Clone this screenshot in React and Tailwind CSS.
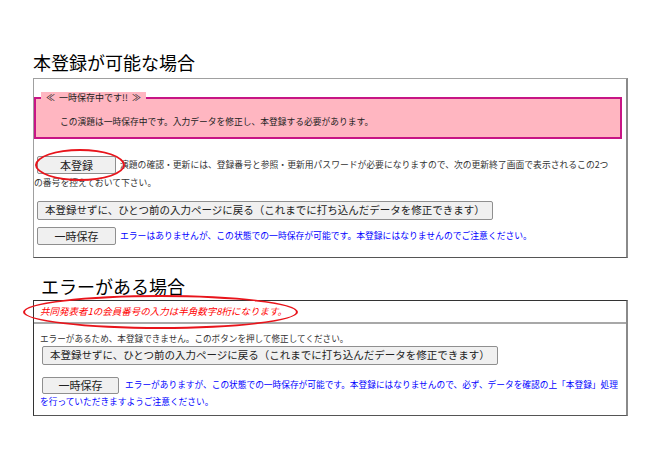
export default function App() {
  const btn =
    "inline-block align-top bg-[#f0f0f0] border border-[#8f8f8f] rounded-[2px] text-[#222] text-center leading-none";

  return (
    <div
      className="min-h-[465px] w-[661px] bg-white pt-[50px] text-[#333]"
      style={{ fontFamily: '"Noto Sans CJK JP", "Noto Sans", sans-serif' }}
    >
      <div className="ml-[33px] w-[595px]">
        {/* 本登録が可能な場合 */}
        <h2 className="mb-[4px] text-[18px] leading-[24px] text-black">本登録が可能な場合</h2>
        <div className="relative border border-[#a0a0a0] border-r-2 border-r-[#8a8a8a] border-b-[#555] pb-[12px]">
          <fieldset className="mt-[13px] mr-[4px] border-2 border-[#c71585] bg-[#ffb6c1]">
            <legend className="ml-[5px] bg-[#ffb6c1] px-[5px] text-[9px] leading-[12px] text-[#222]">
              ≪&nbsp;&nbsp;一時保存中です!!&nbsp;&nbsp;≫
            </legend>
            <p className="pl-[24px] pt-[12px] pb-[9px] text-[8.75px] leading-[12px] text-[#222]">
              この演題は一時保存中です。入力データを修正し、本登録する必要があります。
            </p>
          </fieldset>

          <p className="mt-[17px] text-[8.8px] leading-[18px]">
            <button className={`${btn} ml-[3px] mr-[4px] h-[18px] w-[79px] text-[11px]`}>本登録</button>
            演題の確認・更新には、登録番号と参照・更新用パスワードが必要になりますので、次の更新終了画面で表示されるこの2つ
            <br />
            の番号を控えておいて下さい。
          </p>

          <button className={`${btn} mt-[9px] ml-[3px] block h-[19px] px-[7px] text-[10.5px]`}>
            本登録せずに、ひとつ前の入力ページに戻る（これまでに打ち込んだデータを修正できます）
          </button>

          <div className="mt-[7px] flex items-center">
            <button className={`${btn} ml-[3px] mr-[4px] h-[18px] w-[79px] text-[11px]`}>一時保存</button>
            <span className="text-[8.8px] leading-[12px] text-[#0000ff]">
              エラーはありませんが、この状態での一時保存が可能です。本登録にはなりませんのでご注意ください。
            </span>
          </div>

          {/* 注目マーク */}
          <div className="pointer-events-none absolute left-[1px] top-[70px] h-[32px] w-[90px] rounded-[50%] border-2 border-[#e8141b]" />
        </div>

        {/* エラーがある場合 */}
        <h2 className="mt-[16px] mb-[2px] pl-[8px] text-[18px] leading-[24px] text-black">エラーがある場合</h2>
        <div className="relative border border-[#333] border-r-2 border-r-[#8a8a8a] border-b-[#555] pb-[5px]">
          <p className="pt-[4px] pl-[6px] text-[9.5px] italic leading-[12px] text-[#ff0000]">
            共同発表者1の会員番号の入力は半角数字8桁になります。
          </p>
          <hr className="mt-[5px] border-t-2 border-[#a8a8a8]" />
          <div className="pl-[6px]">
            <p className="mt-[8px] text-[8.6px] leading-[12px]">
              エラーがあるため、本登録できません。このボタンを押して修正してください。
            </p>
            <button className={`${btn} mt-[2px] ml-[2px] block h-[19px] px-[7px] text-[10.5px]`}>
              本登録せずに、ひとつ前の入力ページに戻る（これまでに打ち込んだデータを修正できます）
            </button>
            <p className="mt-[9px] text-[8.7px] leading-[16px] text-[#0000ff]">
              <button className={`${btn} ml-[2px] mr-[6px] h-[17px] w-[77px] text-[11px]`}>一時保存</button>
              エラーがありますが、この状態での一時保存が可能です。本登録にはなりませんので、必ず、データを確認の上「本登録」処理
              <br />
              を行っていただきますようご注意ください。
            </p>
          </div>

          <div className="pointer-events-none absolute -left-[11px] -top-[6px] h-[34px] w-[275px] rounded-[50%] border-2 border-[#e8141b]" />
        </div>
      </div>
    </div>
  );
}
